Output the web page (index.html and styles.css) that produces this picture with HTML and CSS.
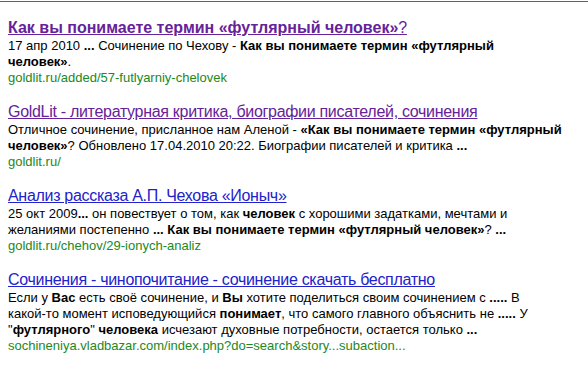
FILE: index.html
```html
<!DOCTYPE html>
<html lang="ru">

<head>
    <meta charset="UTF-8">
    <title>футлярный человек - Поиск</title>
    <link rel="stylesheet" href="styles.css">
</head>

<body>
    <div class="topbar"></div>

    <ol class="results">
        <li class="result">
            <h3><a class="visited" href="#"><b>Как вы понимаете термин «футлярный человек»</b>?</a></h3>
            <div class="snippet">17 апр 2010 <b>...</b> Сочинение по Чехову - <b>Как вы понимаете термин «футлярный человек»</b>.</div>
            <cite>goldlit.ru/added/57-futlyarniy-chelovek</cite>
        </li>

        <li class="result wide">
            <h3><a class="visited" href="#">GoldLit - литературная критика, биографии писателей, сочинения</a></h3>
            <div class="snippet">Отличное сочинение, присланное нам Аленой - <b>«Как вы понимаете термин «футлярный человек»</b>? Обновлено 17.04.2010 20:22. Биографии писателей и критика <b>...</b></div>
            <cite>goldlit.ru/</cite>
        </li>

        <li class="result">
            <h3><a href="#">Анализ рассказа А.П. Чехова «Ионыч»</a></h3>
            <div class="snippet">25 окт 2009<b>...</b> он повествует о том, как <b>человек</b> с хорошими задатками, мечтами и желаниями постепенно <b>... Как вы понимаете термин «футлярный человек»</b>? <b>...</b></div>
            <cite>goldlit.ru/chehov/29-ionych-analiz</cite>
        </li>

        <li class="result">
            <h3><a href="#">Сочинения - чинопочитание - сочинение скачать бесплатно</a></h3>
            <div class="snippet">Если у <b>Вас</b> есть своё сочинение, и <b>Вы</b> хотите поделиться своим сочинением с <b>.....</b> В какой-то момент исповедующийся <b>понимает</b>, что самого главного объяснить не <b>.....</b> У "<b>футлярного</b>" <b>человека</b> исчезают духовные потребности, остается только <b>...</b></div>
            <cite>sochineniya.vladbazar.com/index.php?do=search&amp;story...subaction...</cite>
        </li>
    </ol>
</body>

</html>
```

FILE: styles.css
```css
body {
    margin: 0;
    font-family: "Liberation Sans", Arial, sans-serif;
    background: #fff;
    color: #000;
}

.topbar {
    height: 1px;
    margin-top: 1px;
    background: #3d6a9e;
}

.results {
    list-style: none;
    margin: 0;
    padding: 16px 0 0 8px;
}

.result {
    margin-bottom: 16px;
    max-width: 546px;
}

/* this snippet wraps one word later in the original */
.result.wide {
    max-width: 566px;
}

.result h3 {
    margin: 0;
    font-size: 16px;
    font-weight: normal;
    line-height: 20px;
}

.result h3 a {
    color: #2222cc;
    text-decoration: underline;
    letter-spacing: -0.3px;
}

.result h3 a b {
    letter-spacing: 0;
}

.result h3 a.visited {
    color: #662299;
}

.snippet {
    font-size: 13px;
    line-height: 16px;
}

.result cite {
    display: block;
    font-style: normal;
    font-size: 13px;
    line-height: 16px;
    color: #228822;
}
```
